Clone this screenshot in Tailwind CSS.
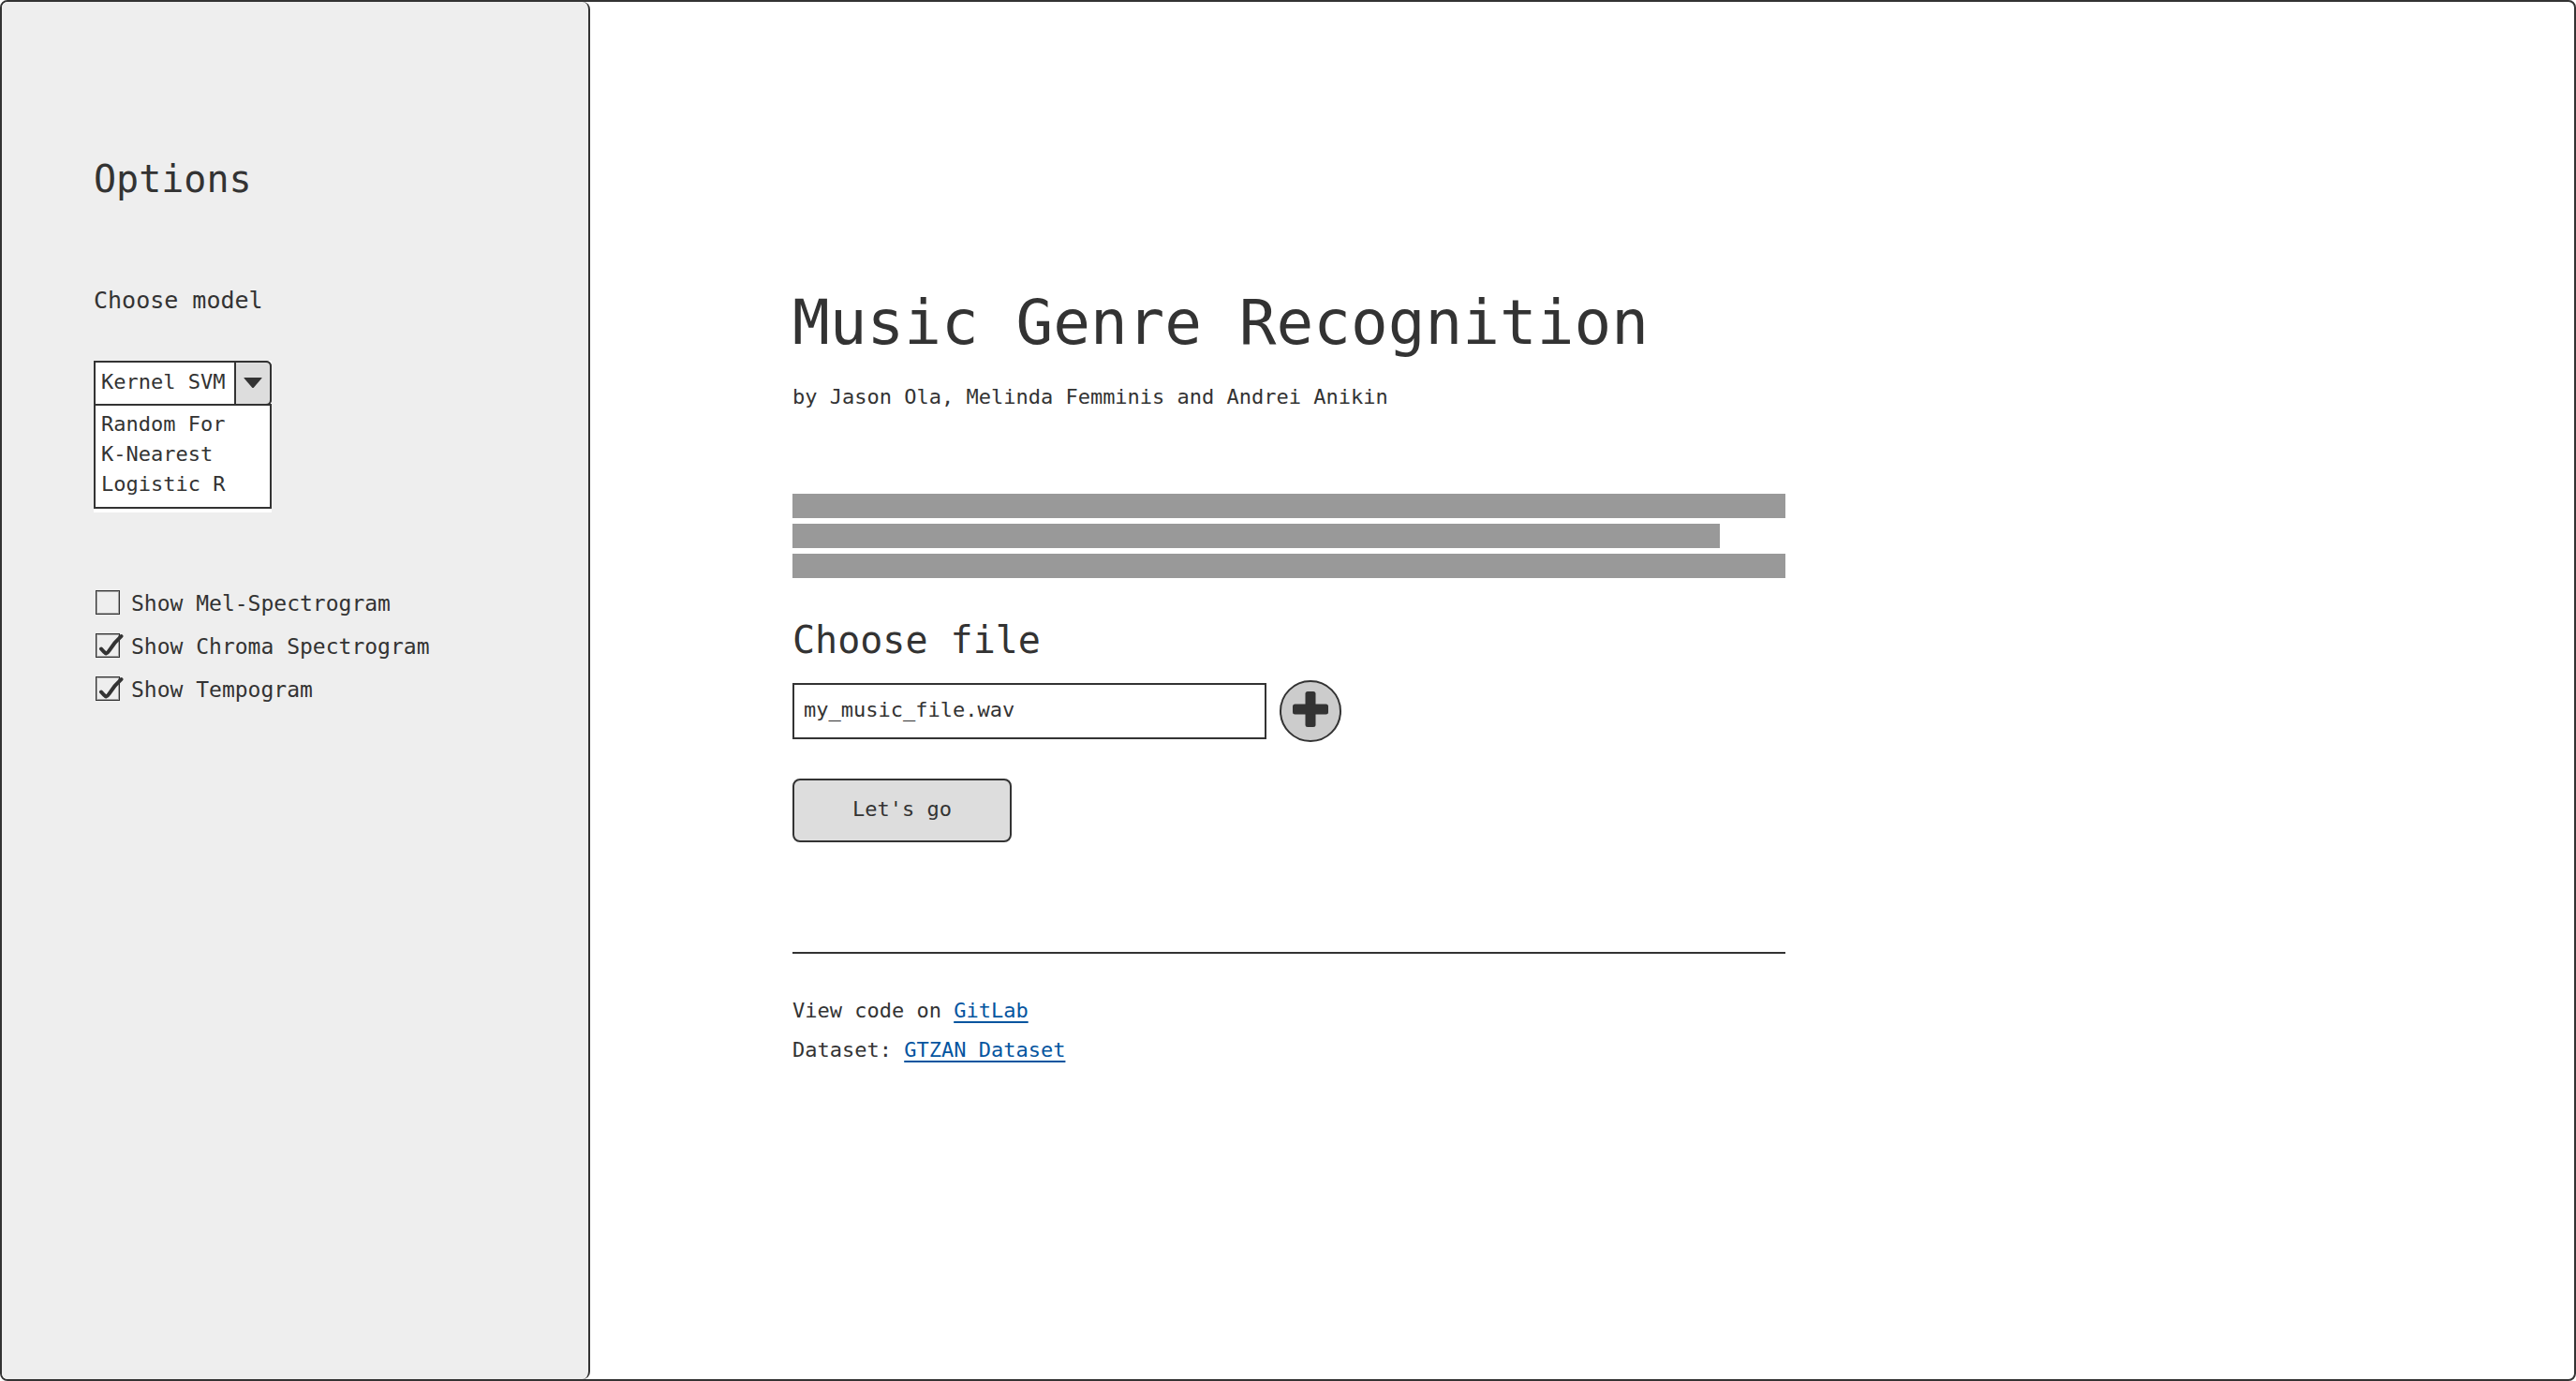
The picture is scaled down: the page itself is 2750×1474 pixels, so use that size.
<!DOCTYPE html>
<html lang="en">
<head>
<meta charset="utf-8">
<meta name="viewport" content="width=device-width, initial-scale=1">
<title>Music Genre Recognition</title>
<script src="https://cdn.jsdelivr.net/npm/@tailwindcss/browser@4"></script>
</head>
<body class="bg-white font-['DejaVu_Sans_Mono',monospace] text-[22px] leading-7 text-[#333333]">
<div class="flex min-h-screen overflow-hidden rounded-lg border-2 border-[#333333]">

  <!-- Options panel -->
  <aside class="w-[628px] shrink-0 rounded-r-lg border-r-2 border-[#333333] bg-[#eeeeee] px-[98px] pt-[165px]">
    <h2 class="text-[40px] leading-[48px]">Options</h2>
    <label for="model" class="mt-[90px] block text-[25px] leading-8">Choose model</label>

    <div class="mt-12 w-[190px] bg-white pb-1">
      <div class="relative">
        <select id="model" class="block h-12 w-full appearance-none rounded-r-md border-2 border-[#333333] bg-white pb-0.5 pl-1.5 leading-8 outline-none">
          <option>Kernel SVM</option>
          <option>Random Forest</option>
          <option>K-Nearest Neighbors</option>
          <option>Logistic Regression</option>
        </select>
        <span class="pointer-events-none absolute inset-y-0 right-0 flex w-10 items-center justify-center rounded-r-md border-2 border-[#333333] bg-[#dddddd]">
          <svg class="h-3 w-5" viewBox="0 0 20 12" fill="#333333" aria-hidden="true"><path d="M1 0h18q1 0 .4.8L11 10.6q-1 1-2 0L.6.8Q0 0 1 0z"/></svg>
        </span>
      </div>
      <ul role="listbox" aria-label="Models" class="-mt-0.5 border-2 border-[#333333] pt-1 pb-2 pl-1.5 leading-8">
        <li role="option">Random For</li>
        <li role="option">K-Nearest</li>
        <li role="option">Logistic R</li>
      </ul>
    </div>

    <div class="mt-[83px] flex flex-col gap-[18px] pl-0.5 text-[23px]">
      <label class="flex items-start gap-3 whitespace-nowrap">
        <span class="relative size-[26px] shrink-0">
          <input type="checkbox" class="peer block size-full appearance-none border border-[#333333] outline outline-[#333333]/40 -outline-offset-2">
          <svg class="pointer-events-none absolute top-0 left-0 hidden h-[26px] w-[30px] peer-checked:block" viewBox="0 0 30 26" fill="none" stroke="#333333" stroke-width="4" stroke-linecap="round" stroke-linejoin="round" aria-hidden="true"><path d="M6 16.500Q8.500 19.500 11 21.500Q13 21 14.500 18.500Q20 9.500 27.500 3"/></svg>
        </span>
        <span>Show Mel-Spectrogram</span>
      </label>
      <label class="flex items-start gap-3 whitespace-nowrap">
        <span class="relative size-[26px] shrink-0">
          <input type="checkbox" checked class="peer block size-full appearance-none border border-[#333333] outline outline-[#333333]/40 -outline-offset-2">
          <svg class="pointer-events-none absolute top-0 left-0 hidden h-[26px] w-[30px] peer-checked:block" viewBox="0 0 30 26" fill="none" stroke="#333333" stroke-width="4" stroke-linecap="round" stroke-linejoin="round" aria-hidden="true"><path d="M6 16.500Q8.500 19.500 11 21.500Q13 21 14.500 18.500Q20 9.500 27.500 3"/></svg>
        </span>
        <span>Show Chroma Spectrogram</span>
      </label>
      <label class="flex items-start gap-3 whitespace-nowrap">
        <span class="relative size-[26px] shrink-0">
          <input type="checkbox" checked class="peer block size-full appearance-none border border-[#333333] outline outline-[#333333]/40 -outline-offset-2">
          <svg class="pointer-events-none absolute top-0 left-0 hidden h-[26px] w-[30px] peer-checked:block" viewBox="0 0 30 26" fill="none" stroke="#333333" stroke-width="4" stroke-linecap="round" stroke-linejoin="round" aria-hidden="true"><path d="M6 16.500Q8.500 19.500 11 21.500Q13 21 14.500 18.500Q20 9.500 27.500 3"/></svg>
        </span>
        <span>Show Tempogram</span>
      </label>
    </div>
  </aside>

  <!-- Page content -->
  <main class="min-w-0 flex-1 px-[216px] pt-[303px]">
    <div class="max-w-[1060px]">
      <h1 class="text-[66px] leading-[80px]">Music Genre Recognition</h1>
      <p class="mt-[25px]">by Jason Ola, Melinda Femminis and Andrei Anikin</p>

      <!-- Placeholder paragraph -->
      <div class="mt-[89px] flex flex-col gap-1.5" aria-hidden="true">
        <div class="h-[26px] bg-[#999999]"></div>
        <div class="mr-[70px] h-[26px] bg-[#999999]"></div>
        <div class="h-[26px] bg-[#999999]"></div>
      </div>

      <form>
        <label for="file" class="mt-[42px] block text-[40px] leading-[48px]">Choose file</label>
        <div class="mt-[19px] flex items-center gap-3.5">
          <input id="file" type="text" value="my_music_file.wav" class="h-[60px] w-[506px] border-2 border-[#333333] bg-white px-2.5 pb-1 outline-none">
          <button type="button" aria-label="Add file" class="flex size-[66px] items-center justify-center rounded-full border-2 border-[#333333] bg-[#cccccc] pb-1">
            <svg class="size-[38px]" viewBox="0 0 38 38" fill="#333333" aria-hidden="true"><rect x="13.500" width="11" height="38" rx="2.500"/><rect y="13.500" width="38" height="11" rx="2.500"/></svg>
          </button>
        </div>
        <button type="submit" class="mt-[39px] h-[68px] w-[234px] rounded-lg border-2 border-[#333333] bg-[#dddddd] pb-0.5">Let's go</button>
      </form>

      <hr class="mt-[117px] border-t-2 border-[#333333]">

      <footer class="mt-10 leading-[42px]">
        <p>View code on <a href="#gitlab" class="text-[#04559f] underline decoration-2 underline-offset-4">GitLab</a></p>
        <p>Dataset: <a href="#gtzan" class="text-[#04559f] underline decoration-2 underline-offset-4">GTZAN Dataset</a></p>
      </footer>
    </div>
  </main>
</div>
</body>
</html>
